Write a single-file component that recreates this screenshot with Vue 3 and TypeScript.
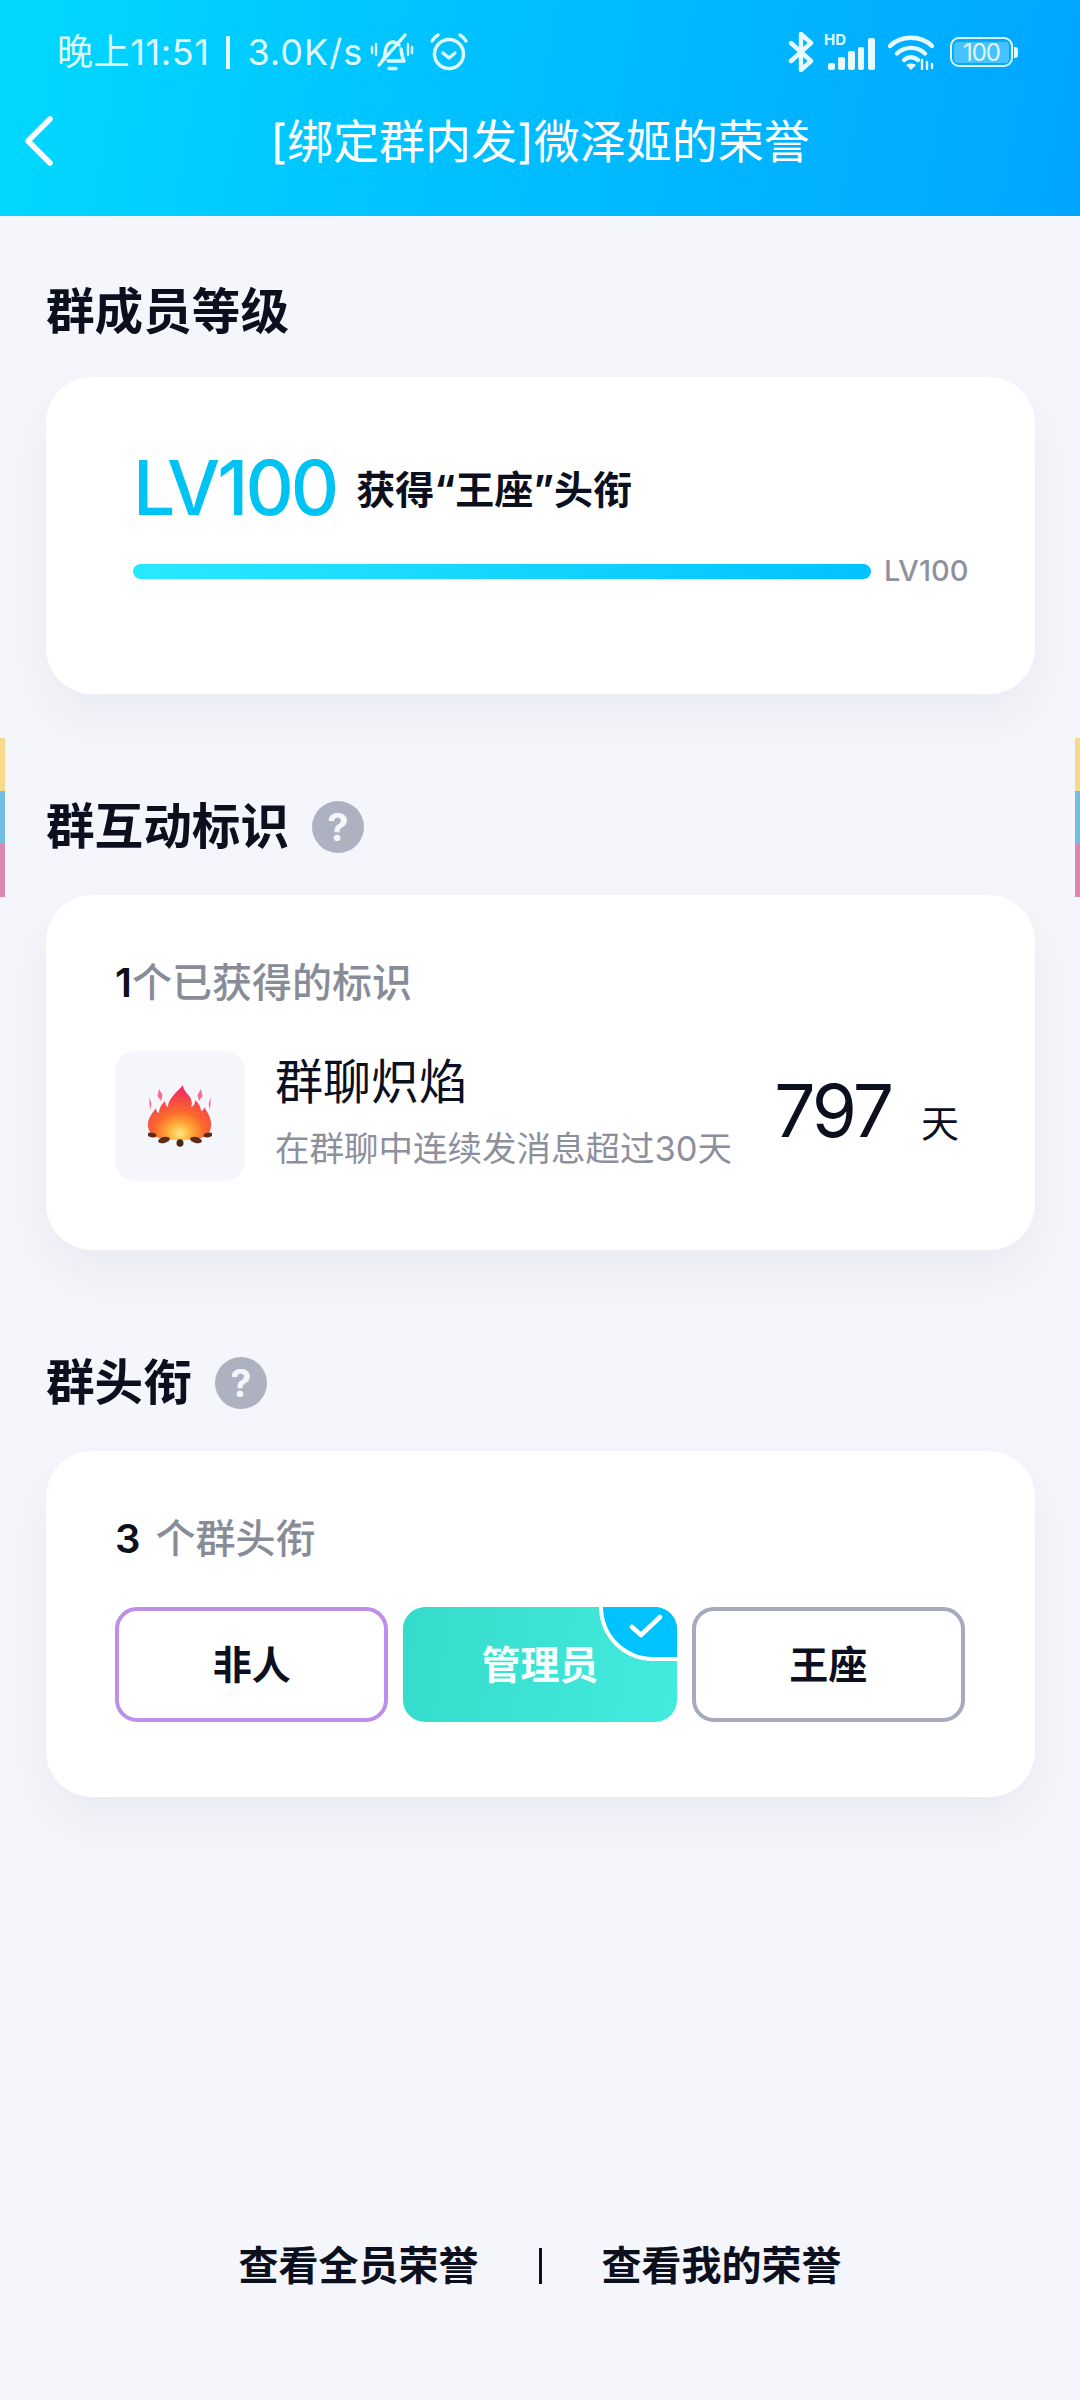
<script setup lang="ts">
interface Chip {
  id: number;
  name: string;
  kind: string;
}

const chips: Chip[] = [
  { id: 1, name: '非人', kind: 'purple' },
  { id: 2, name: '管理员', kind: 'active' },
  { id: 3, name: '王座', kind: 'gray' },
];
</script>

<template>
  <div class="page">
    <header class="top">
      <div class="status">
        <div class="status-left">
          <span class="clock">晚上11:51</span>
          <i class="sep"></i>
          <span class="speed">3.0K/s</span>
          <svg class="bell" viewBox="0 0 44 40" fill="none" stroke="#dffaff" stroke-width="3.4" stroke-linecap="round" stroke-linejoin="round">
            <path d="M12 29c3-3 3-7 3.500-11 .6-4.500 3.500-8 7-8 2.500 0 5 1 6.500 3" />
            <path d="M31 17c.5 4 1 8 3 12H18" />
            <path d="M9 33 35 3" />
            <path d="M19 36.500h7" />
            <path d="M2 15v6M6 12v11M38 12v11M42 15v6" stroke-width="2.400" />
          </svg>
          <svg class="alarm" viewBox="0 0 40 40" fill="none" stroke="#dffaff" stroke-width="3.4" stroke-linecap="round" stroke-linejoin="round">
            <circle cx="20" cy="22" r="14.500" />
            <path d="M14 21l6 5 6-5" />
            <path d="M3 9c1.500-2.500 3.500-4.500 6-6M37 9c-1.500-2.500-3.500-4.500-6-6" />
          </svg>
        </div>
        <div class="status-right">
          <svg class="bt" viewBox="0 0 26 40" fill="none" stroke="#e6fbff" stroke-width="4.400" stroke-linecap="round" stroke-linejoin="round">
            <path d="M3 11l20 18-10 9V2l10 9L3 29" />
          </svg>
          <div class="signal">
            <span class="hd">HD</span>
            <svg viewBox="0 0 48 32" fill="#e6fbff">
              <rect x="1" y="25" width="7" height="7" rx="2" />
              <rect x="11" y="19" width="7" height="13" rx="2" />
              <rect x="21" y="13" width="7" height="19" rx="2" />
              <rect x="31" y="9" width="6" height="23" rx="2" />
              <rect x="41" y="0" width="7" height="32" rx="2" />
            </svg>
          </div>
          <svg class="wifi" viewBox="0 0 46 36" fill="none" stroke="#e6fbff" stroke-width="4.400" stroke-linecap="round">
            <path d="M2 12C13 1 33 1 44 12" />
            <path d="M9 19.500c8-7.500 20-7.500 28 0" />
            <path d="M16 26c4.500-3.500 9.500-3.500 14 0" />
            <path d="M23 36l-5-5c3-2 7-2 10 0z" fill="#e6fbff" stroke="none" />
            <path d="M34 26v9M39 28v7M44 30v4" stroke-width="2.400" />
          </svg>
          <div class="battery">
            <div class="battery-body"><span>100</span></div>
            <div class="battery-tip"></div>
          </div>
        </div>
      </div>
      <div class="nav">
        <svg class="back" viewBox="0 0 28 50" fill="none" stroke="#fff" stroke-width="5.600" stroke-linecap="round" stroke-linejoin="round">
          <path d="M25 3 3 25l22 22" />
        </svg>
        <span class="nav-title">[绑定群内发]微泽姬的荣誉</span>
      </div>
    </header>

    <main class="content">
      <h2 class="sec-title first">群成员等级</h2>
      <section class="card card-level">
        <div class="level-row">
          <span class="level-num">LV100</span>
          <span class="level-text">获得“王座”头衔</span>
        </div>
        <div class="bar-row">
          <div class="bar"></div>
          <span class="bar-label">LV100</span>
        </div>
      </section>

      <h2 class="sec-title">群互动标识<span class="help">?</span></h2>
      <section class="card card-mark">
        <div class="count"><b>1</b>个已获得的标识</div>
        <div class="mark-row">
          <div class="mark-icon">
            <svg viewBox="0 0 64 62" width="64" height="62">
              <defs>
                <radialGradient id="fire" cx="50%" cy="88%" r="78%">
                  <stop offset="0" stop-color="#ffe88a" />
                  <stop offset="0.2" stop-color="#ffb63c" />
                  <stop offset="0.5" stop-color="#fb6a2c" />
                  <stop offset="1" stop-color="#f22f5e" />
                </radialGradient>
              </defs>
              <path d="M1 12l2.500 7-1.500 6zM63 12l-2.500 7 1.500 6zM11 4l3.500 6-1.500 6-3.500-5zM53 4l-3.500 6 1.500 6 3.500-5z" fill="#f76b92" />
              <path d="M35 0c0 6 6 9 8 14 1 3 1 6 0 8 3-1 4-3 4-7 4 4 6 7 6 11 2 0 3-2 3-4 4 6 8 12 7 20-1 5-3 8-5 9-6 3-15 4-26 4S12 54 6 51c-2-1-5-4-6-9-1-8 4-13 8-19 0 3 1 4 3 5 0-5 3-9 6-12 0 3 1 5 3 6 0-8 8-14 15-22z" fill="url(#fire)" />
              <ellipse cx="4" cy="50" rx="4.500" ry="2.400" fill="#5a2a1a" transform="rotate(10 4 50)" />
              <ellipse cx="60" cy="50" rx="4.500" ry="2.400" fill="#5a2a1a" transform="rotate(-10 60 50)" />
              <ellipse cx="16" cy="55" rx="6" ry="3" fill="#5f2c1b" transform="rotate(-14 16 55)" />
              <ellipse cx="48" cy="55" rx="6" ry="3" fill="#5f2c1b" transform="rotate(14 48 55)" />
              <ellipse cx="32" cy="58" rx="3.500" ry="3.800" fill="#4d2416" />
            </svg>
          </div>
          <div class="mark-info">
            <div class="mark-name">群聊炽焰</div>
            <div class="mark-desc">在群聊中连续发消息超过30天</div>
          </div>
          <div class="days">
            <span class="days-num">797</span>
            <span class="days-unit">天</span>
          </div>
        </div>
      </section>

      <h2 class="sec-title">群头衔<span class="help">?</span></h2>
      <section class="card card-title">
        <div class="count"><b class="gap">3</b>个群头衔</div>
        <div class="chips">
          <div v-for="chip in chips" :key="chip.id" class="chip" :class="chip.kind">
            {{ chip.name }}
            <div v-if="chip.kind === 'active'" class="corner">
              <svg viewBox="0 0 34 26" width="34" height="26" fill="none" stroke="#fff" stroke-width="4.600" stroke-linecap="round" stroke-linejoin="round">
                <path d="M3 13l9 8L31 3" />
              </svg>
            </div>
          </div>
        </div>
      </section>
    </main>

    <footer class="links">
      <span>查看全员荣誉</span>
      <i class="divider"></i>
      <span>查看我的荣誉</span>
    </footer>

    <!-- 两侧的彩色条 -->
    <div class="stripes left"><i class="s1"></i><i class="s2"></i><i class="s3"></i></div>
    <div class="stripes right"><i class="s1"></i><i class="s2"></i><i class="s3"></i></div>
  </div>
</template>

<style>
html,
body {
  margin: 0;
  background: #f4f6fb;
}
</style>

<style scoped>
.page {
  position: relative;
  display: flex;
  flex-direction: column;
  width: 1080px;
  height: 2400px;
  overflow: hidden;
  background: #f4f6fb;
  color: #0b0f1e;
  font-family: Inter, "Noto Sans CJK SC", sans-serif;
}

.top {
  height: 216px;
  background: linear-gradient(100deg, #00d9ff 0%, #00c2ff 40%, #00a6ff 100%);
  color: #fff;
}

.status {
  display: flex;
  justify-content: space-between;
  align-items: center;
  height: 72px;
  padding: 16px 62px 0 57px;
  box-sizing: content-box;
  color: #dffaff;
}
.status-left,
.status-right {
  display: flex;
  align-items: center;
}
.clock {
  font-size: 36px;
  line-height: 44px;
  letter-spacing: 0.6px;
  white-space: nowrap;
}
.sep {
  width: 4px;
  height: 33px;
  margin: 0 17px 0 17px;
  background: #dffaff;
}
.speed {
  font-size: 36px;
  line-height: 44px;
  letter-spacing: 1px;
  white-space: nowrap;
}
.bell {
  width: 44px;
  height: 40px;
  margin-left: 7px;
}
.alarm {
  width: 40px;
  height: 40px;
  margin-left: 15px;
}
.bt {
  width: 26px;
  height: 40px;
}
.signal {
  position: relative;
  width: 48px;
  height: 32px;
  margin-left: 13px;
  margin-top: 4px;
}
.signal svg {
  display: block;
  width: 48px;
  height: 32px;
}
.hd {
  position: absolute;
  left: -3px;
  top: -6px;
  font-size: 15px;
  line-height: 15px;
  font-weight: 700;
}
.wifi {
  width: 46px;
  height: 36px;
  margin-left: 13px;
}
.battery {
  display: flex;
  align-items: center;
  margin-left: 16px;
}
.battery-body {
  display: flex;
  align-items: center;
  justify-content: center;
  width: 63px;
  height: 30px;
  box-sizing: border-box;
  border: 2.5px solid #dffaff;
  border-radius: 9px;
  padding: 2px;
}
.battery-body span {
  display: block;
  width: 100%;
  text-align: center;
  background: rgba(255, 255, 255, 0.28);
  border-radius: 4px;
  font-size: 24px;
  line-height: 21px;
  letter-spacing: -1px;
  color: #dffaff;
}
.battery-tip {
  width: 4px;
  height: 11px;
  margin-left: 1px;
  border-radius: 0 3px 3px 0;
  background: #dffaff;
}

.nav {
  position: relative;
  display: flex;
  justify-content: center;
  align-items: center;
  height: 62px;
  margin-top: 22px;
}
.back {
  position: absolute;
  left: 25px;
  top: 6px;
  width: 28px;
  height: 50px;
}
.nav-title {
  font-size: 46px;
  line-height: 62px;
  white-space: nowrap;
}

.content {
  padding: 0 45px 0 46px;
}

.sec-title {
  display: flex;
  align-items: center;
  height: 60px;
  margin: 103px 0 38px 0;
  font-size: 48.600px;
  font-weight: 700;
  line-height: 60px;
}
.sec-title.first {
  margin-top: 66px;
  margin-bottom: 35px;
}
.help {
  display: flex;
  align-items: center;
  justify-content: center;
  width: 52px;
  height: 52px;
  margin-left: 23px;
  border-radius: 50%;
  background: #aeb1c0;
  color: #f4f6fb;
  font-size: 38px;
  font-weight: 700;
  line-height: 52px;
}

.card {
  box-sizing: border-box;
  width: 989px;
  background: #fff;
  border-radius: 46px;
  box-shadow: 0 24px 50px rgba(60, 70, 110, 0.06);
}

.card-level {
  height: 317px;
  padding: 68px 66px 0 87px;
}
.level-row {
  display: flex;
  align-items: center;
  height: 86px;
}
.level-num {
  color: #00c2f3;
  font-size: 75px;
  font-weight: 500;
  line-height: 86px;
  letter-spacing: -3px;
}
.level-text {
  margin-left: 20px;
  font-size: 39px;
  font-weight: 700;
  line-height: 50px;
  margin-top: 3px;
}
.bar-row {
  display: flex;
  align-items: center;
  margin-top: 22px;
}
.bar {
  width: 738px;
  height: 15px;
  border-radius: 8px;
  background: linear-gradient(90deg, #2ae8fc 0%, #00c2ff 100%);
}
.bar-label {
  margin-left: 13px;
  color: #8f929e;
  font-size: 29px;
  font-weight: 500;
  line-height: 36px;
}

.card-mark {
  height: 355px;
  padding: 63px 70px 0 69px;
}
.count {
  color: #888c99;
  font-size: 40px;
  font-weight: 500;
  line-height: 50px;
}
.count b {
  color: #0b0f1e;
  font-weight: 600;
}
.count b.gap {
  margin-right: 15px;
}

.mark-row {
  display: flex;
  align-items: center;
  margin-top: 43px;
}
.mark-icon {
  display: flex;
  flex-shrink: 0;
  align-items: center;
  justify-content: center;
  width: 130px;
  height: 130px;
  border-radius: 20px;
  background: #f4f6fb;
}
.mark-info {
  margin-left: 30px;
  margin-bottom: 10px;
}
.mark-name {
  font-size: 48px;
  line-height: 60px;
}
.mark-desc {
  margin-top: 15px;
  color: #8d909c;
  font-size: 34.500px;
  line-height: 44px;
  white-space: nowrap;
}
.days {
  display: flex;
  align-items: baseline;
  margin-left: auto;
  margin-right: 6px;
  margin-top: -11px;
}
.days-num {
  font-size: 73px;
  line-height: 90px;
  letter-spacing: -3px;
}
.days-unit {
  margin-left: 30px;
  font-size: 38px;
}

.card-title {
  height: 346px;
  padding: 63px 70px 0 69px;
}
.chips {
  display: flex;
  gap: 15px;
  margin-top: 43px;
}
.chip {
  position: relative;
  display: flex;
  align-items: center;
  justify-content: center;
  overflow: hidden;
  box-sizing: border-box;
  width: 274px;
  height: 115px;
  padding-bottom: 6px;
  border-radius: 22px;
  border: 4px solid transparent;
  font-size: 39px;
  font-weight: 700;
}
.chip.purple {
  border-color: #bd8eea;
}
.chip.gray {
  border-color: #a5aabd;
}
.chip.active {
  border: none;
  color: #f4fffd;
  background: linear-gradient(100deg, #35dbca 0%, #43ebdf 100%);
}
.corner {
  position: absolute;
  top: 0;
  right: 0;
  display: flex;
  align-items: center;
  justify-content: center;
  box-sizing: border-box;
  width: 78px;
  height: 54px;
  padding: 0 0 10px 12px;
  border-left: 4px solid #fff;
  border-bottom: 4px solid #fff;
  border-bottom-left-radius: 60px;
  background: #00c2ff;
}

.links {
  display: flex;
  justify-content: center;
  align-items: center;
  margin-top: auto;
  margin-bottom: 114px;
  font-size: 40px;
  font-weight: 700;
  line-height: 40px;
}
.divider {
  width: 3px;
  height: 36px;
  margin: 0 60px;
  background: #0b0f1e;
}

.stripes {
  position: absolute;
  top: 738px;
  display: flex;
  flex-direction: column;
  width: 5px;
}
.stripes.left {
  left: 0;
}
.stripes.right {
  right: 0;
}
.stripes i {
  display: block;
  height: 53px;
}
.s1 {
  background: #f8d98a;
}
.s2 {
  background: #72bfe3;
}
.s3 {
  background: #de86ae;
}
</style>
